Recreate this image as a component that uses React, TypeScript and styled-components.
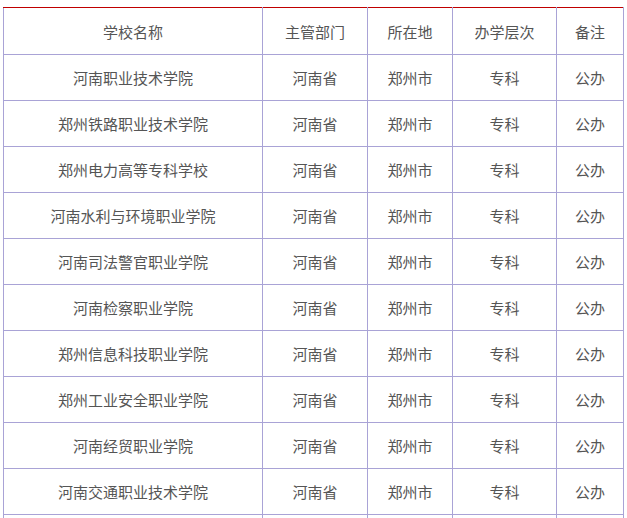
import React from "react";
import styled, { createGlobalStyle } from "styled-components";

const Global = createGlobalStyle`
  html, body { margin: 0; padding: 0; background: #fff; }
  body { font-family: "Microsoft YaHei", "Noto Sans CJK SC", "Noto Sans", sans-serif; }
`;

const Page = styled.div`
  padding: 7px 0 0 3px;
`;

const Table = styled.table`
  border-collapse: collapse;
  table-layout: fixed;
  width: 620px;
  font-size: 15px;
  color: #555;
`;

const HeadCell = styled.th<{ $w: number }>`
  width: ${(p) => p.$w}px;
  height: 47px;
  padding: 0;
  box-sizing: border-box;
  font-weight: normal;
  text-align: center;
  border: 1px solid #a9a3d6;
  border-top: 1px solid #c00000;
`;

const Cell = styled.td`
  height: 46px;
  padding: 0;
  box-sizing: border-box;
  text-align: center;
  border: 1px solid #a9a3d6;
  white-space: nowrap;
`;

const cols: [string, number][] = [
  ["学校名称", 259],
  ["主管部门", 105],
  ["所在地", 85],
  ["办学层次", 104],
  ["备注", 67],
];

const schools = [
  "河南职业技术学院",
  "郑州铁路职业技术学院",
  "郑州电力高等专科学校",
  "河南水利与环境职业学院",
  "河南司法警官职业学院",
  "河南检察职业学院",
  "郑州信息科技职业学院",
  "郑州工业安全职业学院",
  "河南经贸职业学院",
  "河南交通职业技术学院",
];

export default function App() {
  return (
    <Page>
      <Global />
      <Table>
        <thead>
          <tr>
            {cols.map(([t, w]) => (
              <HeadCell key={t} $w={w}>
                {t}
              </HeadCell>
            ))}
          </tr>
        </thead>
        <tbody>
          {schools.map((s) => (
            <tr key={s}>
              <Cell>{s}</Cell>
              <Cell>河南省</Cell>
              <Cell>郑州市</Cell>
              <Cell>专科</Cell>
              <Cell>公办</Cell>
            </tr>
          ))}
          <tr>
            <Cell />
            <Cell />
            <Cell />
            <Cell />
            <Cell />
          </tr>
        </tbody>
      </Table>
    </Page>
  );
}
